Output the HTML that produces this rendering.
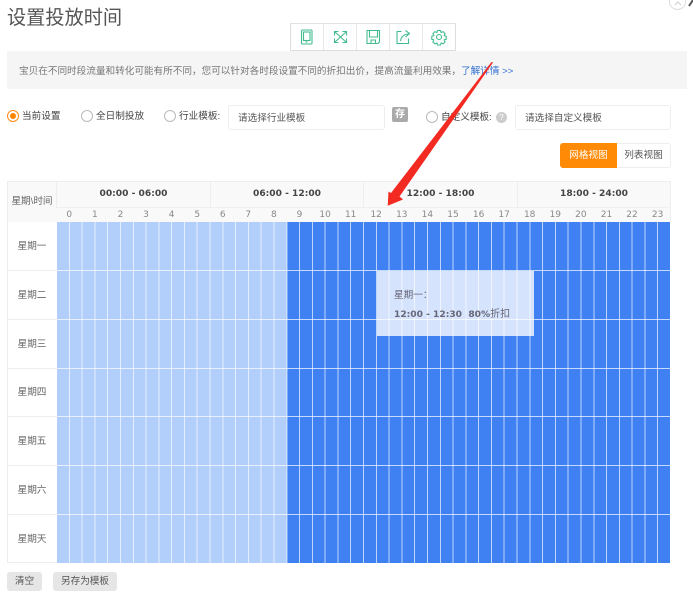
<!DOCTYPE html>
<html lang="zh"><head><meta charset="utf-8"><style>
*{box-sizing:border-box}
html,body{margin:0;padding:0;background:#fff}
#p{position:relative;width:693px;height:598px;overflow:hidden;font-family:"Liberation Sans","Noto Sans CJK SC",sans-serif;color:#555;font-size:9.62px}
#p div,#p svg{position:absolute}
.t{white-space:nowrap;line-height:14px}
.radio{width:12px;height:12px;border:1px solid #bbb;border-radius:50%;background:#fff}
.inp{height:25px;top:105px;border:1px solid #eee;border-radius:3px;line-height:25px;padding-left:9px;color:#555;background:#fff}
.hd{top:181px;height:26px;text-align:center;font:bold 9.1px/27px "DejaVu Sans",sans-serif;color:#444;border-left:1px solid #eee}
.h{top:207px;height:15px;width:25.58px;text-align:center;font:9px/17px "DejaVu Sans",sans-serif;color:#888}
.d{left:8px;width:48px;text-align:center;height:14px;line-height:14px;color:#666;white-space:nowrap}
.rl{left:8px;width:49px;height:1px;background:#eee}
.btn{top:572px;height:19px;background:#e6e6e6;border-radius:3px;text-align:center;line-height:20px;color:#555}
</style></head><body><div id="p">

<div class="t" style="left:7px;top:6px;font-size:19.2px;line-height:26px;color:#555">设置投放时间</div>

<div style="left:7px;top:51px;width:680px;height:38px;background:#f5f5f5"></div>
<div class="t" style="left:19px;top:65px;color:#777">宝贝在不同时段流量和转化可能有所不同，您可以针对各时段设置不同的折扣出价，提高流量利用效果，<span style="color:#2f6fd0">了解详情 &gt;&gt;</span></div>

<div style="left:290px;top:23px;width:166px;height:28px;border:1px solid #ddd;border-top-color:#e2e2e2;background:#fff"></div>
<div style="left:323px;top:24px;width:1px;height:26px;background:#e8e8e8"></div>
<div style="left:356px;top:24px;width:1px;height:26px;background:#e8e8e8"></div>
<div style="left:389px;top:24px;width:1px;height:26px;background:#e8e8e8"></div>
<div style="left:422px;top:24px;width:1px;height:26px;background:#e8e8e8"></div>
<svg style="left:290px;top:23px" width="166" height="28" viewBox="0 0 166 28" fill="none" stroke="#43bb8f" stroke-width="1.1">
<rect x="11.500" y="7" width="10.500" height="14" rx="1"/><rect x="13.500" y="9" width="6.500" height="8.500"/><path d="M15.500 19h2"/>
<path d="M45 9l11 10M56 9L45 19M44.500 12.500V8.500h4M56.500 12.500V8.500h-4M44.500 15.500v4h4M56.500 15.500v4h-4"/>
<path d="M77 7.500h12.500v11.500l-1.500 1.500h-11zM79.500 8v6h8V8M81 20.500v-3.500h4.500v3.500"/>
<path d="M111.500 8.500h-4.500v12h11.500V15.500M110.500 18c.5-4 3-6.500 8-7M115.500 7.500l4 3-4 3.500"/>
<path d="M147.500 7.500h3l.6 2 2-.9 2 2-.9 2 2 .7v3l-2 .6.9 2-2 2-2-.9-.6 2h-3l-.6-2-2 .9-2-2 .9-2-2-.6v-3l2-.7-.9-2 2-2 2 .9z"/><circle cx="149" cy="14" r="2.500"/>
</svg>

<div class="radio" style="left:7px;top:110px;border-color:#ff8a1a"></div>
<div style="left:10px;top:113px;width:6px;height:6px;border-radius:50%;background:#ff8400"></div>
<div class="t" style="left:22px;top:110px;color:#444">当前设置</div>
<div class="radio" style="left:81px;top:110px"></div>
<div class="t" style="left:96px;top:110px;color:#444">全日制投放</div>
<div class="radio" style="left:164px;top:110px"></div>
<div class="t" style="left:179px;top:110px;color:#444">行业模板:</div>
<div class="inp" style="left:228px;width:157px">请选择行业模板</div>
<div style="left:392px;top:107px;width:16px;height:15px;background:#aaa;border-radius:2px;color:#fff;text-align:center;line-height:15px;font-size:10px;font-weight:bold">存</div>
<div class="radio" style="left:426px;top:111px"></div>
<div class="t" style="left:441px;top:111px;color:#444">自定义模板:</div>
<div style="left:496px;top:112px;width:11px;height:11px;border-radius:50%;background:#ccc;color:#fff;text-align:center;font-size:8px;line-height:11px">?</div>
<div class="inp" style="left:515px;width:156px">请选择自定义模板</div>

<div style="left:669px;top:-7px;width:17px;height:17px;border:1px solid #ddd;border-radius:50%"></div>
<svg style="left:665px;top:0" width="28" height="10" viewBox="0 0 28 10" fill="none"><path d="M10 5l3-3 3 3" stroke="#ccc"/><path d="M28 0l-4 6" stroke="#555" stroke-width="2"/></svg>

<div style="left:560px;top:143px;width:57px;height:25px;background:#ff8a05;border-radius:3px 0 0 3px;color:#fff;text-align:center;line-height:26px">网格视图</div>
<div style="left:617px;top:143px;width:54px;height:25px;border:1px solid #eee;border-left:0;border-radius:0 3px 3px 0;text-align:center;line-height:24px;color:#555">列表视图</div>

<div style="left:7px;top:181px;width:664px;height:41px;background:#f9f9f9;border:1px solid #eee;border-bottom:0"></div>
<div style="left:56px;top:207px;width:614px;height:1px;background:#f0f0f0"></div>
<div class="d" style="top:195px">星期\时间</div>
<div class="hd" style="left:56px;width:154px">00:00 - 06:00</div>
<div class="hd" style="left:210px;width:153px">06:00 - 12:00</div>
<div class="hd" style="left:363px;width:154px">12:00 - 18:00</div>
<div class="hd" style="left:517px;width:153px">18:00 - 24:00</div>

<div class="h" style="left:56.500px">0</div><div class="h" style="left:82.100px">1</div><div class="h" style="left:107.700px">2</div><div class="h" style="left:133.200px">3</div><div class="h" style="left:158.800px">4</div><div class="h" style="left:184.400px">5</div><div class="h" style="left:210px">6</div><div class="h" style="left:235.500px">7</div><div class="h" style="left:261.100px">8</div><div class="h" style="left:286.700px">9</div><div class="h" style="left:312.300px">10</div><div class="h" style="left:337.900px">11</div><div class="h" style="left:363.400px">12</div><div class="h" style="left:389px">13</div><div class="h" style="left:414.600px">14</div><div class="h" style="left:440.200px">15</div><div class="h" style="left:465.800px">16</div><div class="h" style="left:491.300px">17</div><div class="h" style="left:516.900px">18</div><div class="h" style="left:542.500px">19</div><div class="h" style="left:568.100px">20</div><div class="h" style="left:593.700px">21</div><div class="h" style="left:619.200px">22</div><div class="h" style="left:644.800px">23</div>

<div style="left:7px;top:222px;width:1px;height:341px;background:#eee"></div>
<div style="left:7px;top:562px;width:50px;height:1px;background:#eee"></div>
<div class="rl" style="top:270px"></div><div class="rl" style="top:319px"></div><div class="rl" style="top:368px"></div><div class="rl" style="top:416px"></div><div class="rl" style="top:465px"></div><div class="rl" style="top:514px"></div>
<div class="d" style="top:240px">星期一</div><div class="d" style="top:289px">星期二</div><div class="d" style="top:338px">星期三</div><div class="d" style="top:386px">星期四</div><div class="d" style="top:435px">星期五</div><div class="d" style="top:484px">星期六</div><div class="d" style="top:533px">星期天</div>

<div style="left:56.500px;top:222px;width:230.200px;height:340.500px;background:#b2cefa"></div>
<div style="left:286.700px;top:222px;width:383.800px;height:340.500px;background:#3f81f3"></div>
<div style="left:56.500px;top:222px;width:614px;height:340.500px;background:repeating-linear-gradient(90deg,transparent 0,transparent 11.792px,rgba(255,255,255,.66) 11.792px,rgba(255,255,255,.66) 12.792px)"></div>
<div style="left:56.500px;top:270px;width:614px;height:1px;background:rgba(255,255,255,.7)"></div>
<div style="left:56.500px;top:319px;width:614px;height:1px;background:rgba(255,255,255,.7)"></div>
<div style="left:56.500px;top:368px;width:614px;height:1px;background:rgba(255,255,255,.7)"></div>
<div style="left:56.500px;top:416px;width:614px;height:1px;background:rgba(255,255,255,.7)"></div>
<div style="left:56.500px;top:465px;width:614px;height:1px;background:rgba(255,255,255,.7)"></div>
<div style="left:56.500px;top:514px;width:614px;height:1px;background:rgba(255,255,255,.7)"></div>

<div style="left:376.500px;top:271px;width:157.500px;height:65px;background:rgba(255,255,255,.78)"></div>
<div class="t" style="left:394px;top:289px;color:#667">星期一：</div>
<div class="t" style="left:394px;top:306px;color:#667;font:bold 9.100px/14px 'DejaVu Sans','Noto Sans CJK SC',sans-serif">12:00 - 12:30 &nbsp;80%<span style="font-weight:400;font-size:10px;font-family:'Noto Sans CJK SC',sans-serif">折扣</span></div>

<div class="btn" style="left:7px;width:35px">清空</div>
<div class="btn" style="left:53px;width:64px">另存为模板</div>

<svg style="left:0;top:0" width="693" height="598" viewBox="0 0 693 598">
<path d="M491.500 62L391 193L388.500 191.500L387.700 205.700L403 199.500L399.500 196.500L493 62.500z" fill="#f22a22"/>
</svg>

</div></body></html>
